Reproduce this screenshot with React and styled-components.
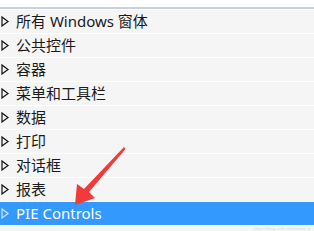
import React from 'react';
import styled, { createGlobalStyle } from 'styled-components';

const items = [
    '所有 Windows 窗体',
    '公共控件',
    '容器',
    '菜单和工具栏',
    '数据',
    '打印',
    '对话框',
    '报表',
    'PIE Controls',
];

export default function App(){
    return(
        <Page>
            <GlobalStyle/>
            <Panel>
                {items.map((label, i) => {
                    const selected = i === items.length - 1;
                    return (
                        <Row key={label} $selected={selected}>
                            <Expander viewBox='0 0 8 11' $selected={selected}>
                                <path d='M1 1 L7 5.5 L1 10 Z' fill='none' stroke='currentColor' strokeWidth='1.2'/>
                            </Expander>
                            <Label>{label}</Label>
                        </Row>
                    )
                })}
                <Filler>
                    <Watermark>https://blog.csdn.net/weixin_4</Watermark>
                </Filler>
            </Panel>
            <Arrow viewBox='0 0 314 231'>
                <path d='M124 147 L125.5 149 L89 192 L95 198 L75 205 L77 184 L84 189 Z' fill='#f23a3a'/>
            </Arrow>
        </Page>
    )
}

const GlobalStyle = createGlobalStyle`
    body{
        margin: 0;
        background: #ffffff;
        font-family: "Noto Sans", "Noto Sans CJK SC", sans-serif;
    }
`;

const Page = styled.div`
    position: relative;
    width: 314px;
    height: 231px;
    overflow: hidden;
    padding-top: 7px;
    box-sizing: border-box;
`;

const Panel = styled.div`
    border-top: 2px solid #c8d1e2;
    display: flex;
    flex-direction: column;
`;

const Row = styled.div`
    display: flex;
    align-items: center;
    height: 23px;
    border-top: 1px solid #ffffff;
    background: ${p => p.$selected ? '#3399ff' : '#f5f5f5'};
    color: ${p => p.$selected ? '#ffffff' : '#1a1a1a'};
`;

const Expander = styled.svg`
    width: 8px;
    height: 11px;
    margin: 0 7px 0 1px;
    color: ${p => p.$selected ? '#cfe6ff' : '#111111'};
    flex-shrink: 0;
`;

const Label = styled.span`
    font-size: 15px;
    line-height: 23px;
    white-space: nowrap;
`;

const Filler = styled.div`
    height: 5px;
    border-top: 1px solid #ffffff;
    background: #f5f5f5;
    display: flex;
    justify-content: flex-end;
    align-items: center;
    padding-right: 4px;
`;

const Watermark = styled.span`
    font-size: 4px;
    color: #d6d6ee;
    white-space: nowrap;
`;

const Arrow = styled.svg`
    position: absolute;
    left: 0;
    top: 0;
    width: 314px;
    height: 231px;
    pointer-events: none;
`;
